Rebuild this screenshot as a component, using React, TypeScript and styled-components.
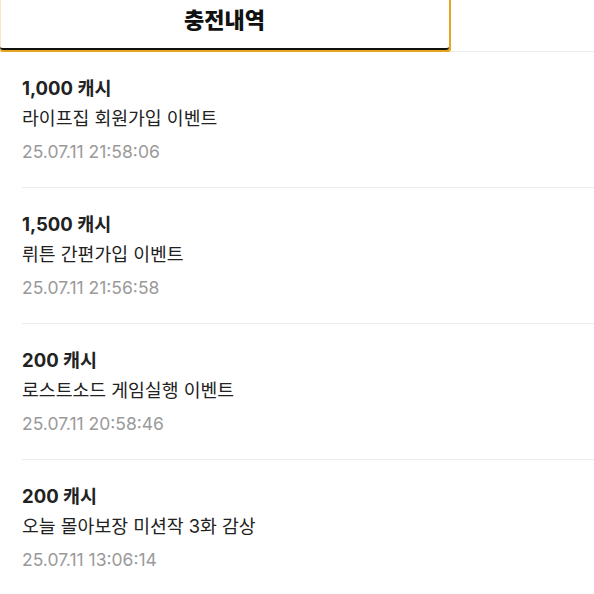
import React from "react";
import styled, { createGlobalStyle } from "styled-components";

const Global = createGlobalStyle`
  html, body { margin: 0; padding: 0; background: #fff; }
  body { font-family: Inter, "Noto Sans CJK KR", sans-serif; }
`;

const Page = styled.div`
  width: 594px;
  background: #fff;
`;

const TabBar = styled.div`
  display: flex;
  height: 52px;
  box-sizing: border-box;
  border-bottom: 1px solid #ececec;
`;

const Tab = styled.div<{ $active?: boolean }>`
  width: 449px;
  height: 50px;
  box-sizing: border-box;
  display: flex;
  align-items: center;
  justify-content: center;
  padding-bottom: 12px;
  font-size: 22px;
  font-weight: 800;
  color: #111;
  border-bottom: 2px solid ${(p) => (p.$active ? "#111" : "transparent")};
  border-radius: 0 0 3px 3px;
  box-shadow: ${(p) =>
    p.$active
      ? "2px 0 0 #e8a41c, 0 2px 0 #e8a41c, 2px 2px 0 #e8a41c, inset 1px 0 0 rgba(232,164,28,0.25)"
      : "none"};
`;

const List = styled.div`
  display: flex;
  flex-direction: column;
`;

const Item = styled.div`
  margin-left: 22px;
  padding: 24px 0 23px;
  border-bottom: 1px solid #ececec;
  display: flex;
  flex-direction: column;
  &:last-child { border-bottom: none; }
`;

const Amount = styled.div`
  font-size: 18.5px;
  font-weight: 700;
  line-height: 24px;
  color: #222;
`;

const Desc = styled.div`
  margin-top: 6px;
  font-size: 18.3px;
  line-height: 24px;
  color: #222;
`;

const Date = styled.div`
  margin-top: 10px;
  font-size: 17.5px;
  line-height: 24px;
  color: #9a9a9a;
`;

const rows = [
  { amount: "1,000 캐시", desc: "라이프집 회원가입 이벤트", date: "25.07.11 21:58:06" },
  { amount: "1,500 캐시", desc: "뤼튼 간편가입 이벤트", date: "25.07.11 21:56:58" },
  { amount: "200 캐시", desc: "로스트소드 게임실행 이벤트", date: "25.07.11 20:58:46" },
  { amount: "200 캐시", desc: "오늘 몰아보장 미션작 3화 감상", date: "25.07.11 13:06:14" },
];

export default function App() {
  return (
    <Page>
      <Global />
      <TabBar>
        <Tab $active>충전내역</Tab>
      </TabBar>
      <List>
        {rows.map((r, i) => (
          <Item key={i}>
            <Amount>{r.amount}</Amount>
            <Desc>{r.desc}</Desc>
            <Date>{r.date}</Date>
          </Item>
        ))}
      </List>
    </Page>
  );
}
